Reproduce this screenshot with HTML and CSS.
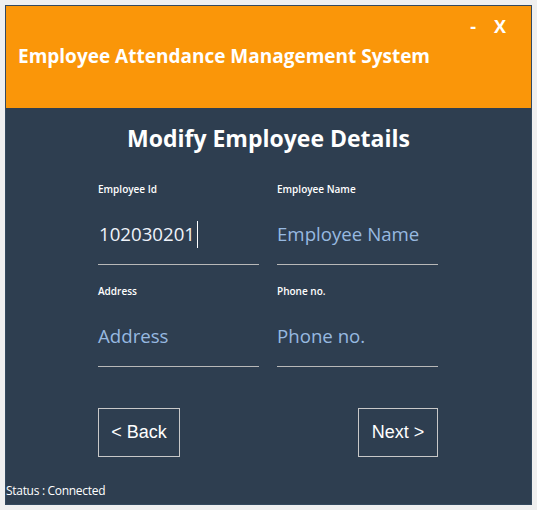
FILE: index.html
```html
<!DOCTYPE html>
<html>
<head>
<meta charset="utf-8">
<link rel="stylesheet" href="styles.css">
</head>
<body>
<div class="window">
  <header class="header">
    <div class="controls"><span class="ctl-min">-</span><span class="ctl-close">X</span></div>
    <h1 class="app-title">Employee Attendance Management System</h1>
  </header>
  <main class="content">
    <h2 class="heading">Modify Employee Details</h2>
    <div class="form">
      <div class="field">
        <div class="label">Employee Id</div>
        <div class="value">102030201<span class="caret"></span></div>
      </div>
      <div class="field">
        <div class="label">Employee Name</div>
        <div class="value placeholder">Employee Name</div>
      </div>
      <div class="field">
        <div class="label">Address</div>
        <div class="value placeholder">Address</div>
      </div>
      <div class="field">
        <div class="label">Phone no.</div>
        <div class="value placeholder">Phone no.</div>
      </div>
    </div>
    <div class="actions">
      <button class="btn btn-back">&lt; Back</button>
      <button class="btn btn-next">Next &gt;</button>
    </div>
    <div class="status">Status : Connected</div>
  </main>
</div>
</body>
</html>
```
FILE: styles.css
```css
* { box-sizing: border-box; }
html, body { margin: 0; padding: 0; }
body {
  background: #efefef;
  font-family: "Open Sans", "Noto Sans", sans-serif;
}
.window {
  margin: 5px;
  width: 527px;
  height: 500px;
  border: 1px solid #34495e;
  display: flex;
  flex-direction: column;
  background: #2e3e50;
}
.header {
  height: 102px;
  background: #fa9609;
  color: #fff;
  display: flex;
  flex-direction: column;
  padding: 10px 0 0 12px;
}
.controls {
  display: flex;
  justify-content: flex-end;
  gap: 18px;
  padding-right: 25px;
  font-weight: 700;
  font-size: 18px;
  line-height: 20px;
}
.app-title {
  margin: 7px 0 0 0;
  font-size: 19px;
  line-height: 26px;
  font-weight: 700;
}
.content {
  flex: 1;
  display: flex;
  flex-direction: column;
  padding-top: 14px;
  color: #fff;
}
.heading {
  margin: 0;
  text-align: center;
  font-size: 23px;
  line-height: 32px;
  font-weight: 700;
}
.form {
  margin: 28px 0 0 92px;
  display: grid;
  grid-template-columns: 161px 161px;
  column-gap: 18px;
  row-gap: 19px;
}
.field {
  display: flex;
  flex-direction: column;
  border-bottom: 1px solid #b8b8b8;
  padding-bottom: 16px;
}
.label {
  font-size: 10px;
  line-height: 14px;
  font-weight: 600;
  color: #fff;
}
.value {
  margin-top: 24px;
  font-size: 18.67px;
  line-height: 28px;
  color: #eef3fa;
  padding-left: 1px;
  display: flex;
  align-items: center;
}
.value.placeholder { color: #97b9e0; padding-left: 0; }
.caret {
  display: inline-block;
  width: 1px;
  height: 27px;
  background: #fff;
  margin-left: 2px;
}
.actions {
  width: 340px;
  margin: 41px 0 0 92px;
  display: flex;
  justify-content: space-between;
}
.btn {
  height: 49px;
  background: transparent;
  border: 1px solid #c8c8c8;
  color: #fff;
  font-family: "Liberation Sans", Arial, sans-serif;
  font-size: 18px;
  padding: 0;
}
.btn-back { width: 82px; }
.btn-next { width: 80px; }
.status {
  margin-top: 26px;
  font-size: 12px;
  line-height: 16px;
  letter-spacing: -0.3px;
  color: #fff;
}
```
